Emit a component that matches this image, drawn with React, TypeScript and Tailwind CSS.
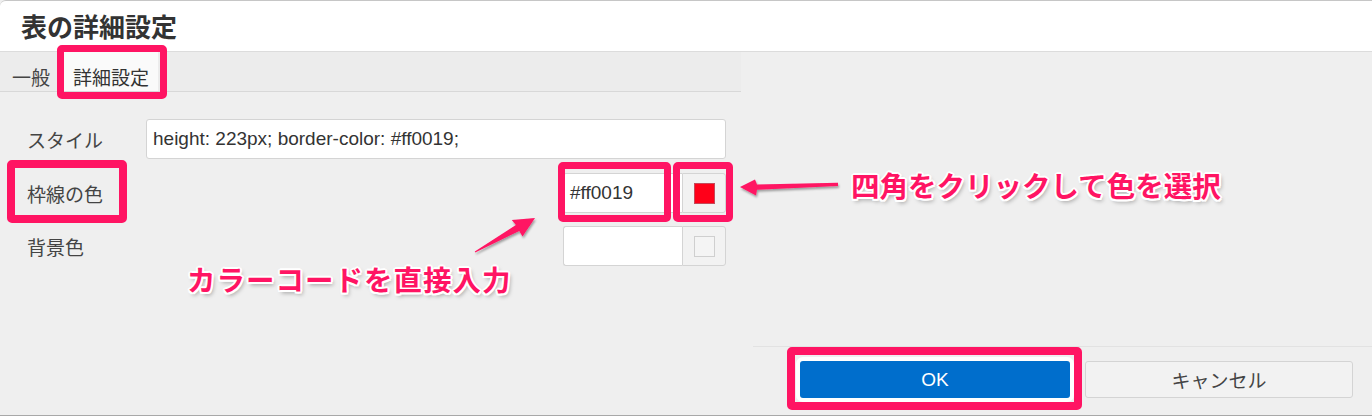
import React from "react";

const PINK = "#ff1463";

function Swatch({ color, border }: { color: string; border: string }) {
  return (
    <div className="w-[44px] h-full border border-[#d4d4d4] rounded-r-[3px] bg-[#f2f2f2] flex items-center justify-center">
      <div className="w-[21px] h-[21px] border" style={{ backgroundColor: color, borderColor: border }} />
    </div>
  );
}

export default function App() {
  const labelCls = "w-[146px] pl-[27px] text-[19px] text-[#444] leading-none";
  const annot =
    "absolute font-bold text-[28.5px] leading-none text-[#ff1463] whitespace-nowrap [text-shadow:2px_0_0_#fff,-2px_0_0_#fff,0_2px_0_#fff,0_-2px_0_#fff,1.5px_1.5px_0_#fff,-1.5px_-1.5px_0_#fff,1.5px_-1.5px_0_#fff,-1.5px_1.5px_0_#fff,2px_3px_4px_rgba(0,0,0,0.35)]";
  return (
    <div className="relative w-[1372px] h-[416px] overflow-hidden bg-[#efefef] flex flex-col border-b border-[#a8a8a8] font-['Noto_Sans_CJK_JP',sans-serif]">
      {/* Title */}
      <div className="h-[52px] shrink-0 bg-white border-t border-b border-t-[#c6c6c6] border-b-[#dcdcdc] rounded-tl-[6px] pl-[21px] flex items-center text-[26px] font-bold text-[#333] leading-none">
        表の詳細設定
      </div>

      <div className="flex-1 flex min-h-0">
        {/* Left column */}
        <div className="w-[753px] shrink-0 flex flex-col">
          <div className="w-[741px] h-[40px] border-b border-[#d8d8d8] bg-[#ececec] flex">
            <div className="pl-[12px] pr-[14px] pt-[10px] flex items-center text-[19px] text-[#444] leading-none">一般</div>
            <div className="bg-[#fafafa] px-[9px] pt-[10px] flex items-center text-[19px] text-[#333] leading-none">詳細設定</div>
          </div>

          <div className="w-[726px] pt-[27px] flex flex-col">
            <div className="flex items-center h-[40px]">
              <div className={labelCls}>スタイル</div>
              <div className="w-[580px] h-full bg-white border border-[#d4d4d4] rounded-[3px] px-[6px] flex items-center font-['Liberation_Sans',sans-serif] text-[19px] text-[#333]">
                height: 223px; border-color: #ff0019;
              </div>
            </div>

            <div className="flex items-center h-[40px] mt-[14px]">
              <div className={labelCls}>枠線の色</div>
              <div className="ml-auto flex h-full">
                <div className="w-[119px] h-full bg-white border border-r-0 border-[#d4d4d4] rounded-l-[3px] px-[6px] flex items-center font-['Liberation_Sans',sans-serif] text-[19px] text-[#333]">
                  #ff0019
                </div>
                <Swatch color="#ff0019" border="#c44a5a" />
              </div>
            </div>

            <div className="flex items-center h-[40px] mt-[13px]">
              <div className={labelCls}>背景色</div>
              <div className="ml-auto flex h-full">
                <div className="w-[119px] h-full bg-white border border-r-0 border-[#d4d4d4] rounded-l-[3px]" />
                <Swatch color="#f4f4f4" border="#cfcfcf" />
              </div>
            </div>
          </div>
        </div>

        {/* Right column */}
        <div className="flex-1 flex flex-col justify-end">
          <div className="h-[69px] border-t border-[#e2e2e2] pt-[14px] pl-[47px] flex gap-[15px]">
            <button className="w-[270px] h-[37px] rounded-[3px] bg-[#006ecc] text-white text-[19px] leading-none font-['Liberation_Sans',sans-serif] ring-4 ring-white">
              OK
            </button>
            <button className="w-[268px] h-[37px] rounded-[3px] bg-[#f2f2f2] border border-[#d4d4d4] text-[#444] text-[19px] leading-none">
              キャンセル
            </button>
          </div>
        </div>
      </div>

      {/* Annotation boxes */}
      <div className="absolute left-[57px] top-[45px] w-[110px] h-[54px] border-[7px] border-[#ff1463] rounded-[5px]" />
      <div className="absolute left-[7px] top-[160px] w-[120px] h-[63px] border-[8px] border-[#ff1463] rounded-[5px]" />
      <div className="absolute left-[558px] top-[162px] w-[113px] h-[60px] border-[7px] border-[#ff1463] rounded-[5px]" />
      <div className="absolute left-[673px] top-[162px] w-[60px] h-[60px] border-[7px] border-[#ff1463] rounded-[5px]" />
      <div className="absolute left-[787px] top-[347px] w-[295px] h-[63px] border-[8px] border-[#ff1463] rounded-[5px]" />

      {/* Arrows */}
      <svg className="absolute left-0 top-0 pointer-events-none" width="1372" height="416">
        <defs>
          <filter id="sh" x="-20%" y="-50%" width="140%" height="200%">
            <feDropShadow dx="1" dy="2" stdDeviation="1.2" floodColor="#000" floodOpacity="0.35" />
          </filter>
        </defs>
        <polygon
          points="838,182.8 757,184.6 755,179.5 740,187 756,195.5 757,189.8 838,186"
          fill={PINK}
          filter="url(#sh)"
        />
        <polygon
          points="475.2,252.4 519.3,230.9 522.5,236.5 535,218 511.8,220 515.9,224.9 474.8,251.6"
          fill={PINK}
          filter="url(#sh)"
        />
      </svg>

      <div className={annot + " left-[851px] top-[171px]"}>四角をクリックして色を選択</div>
      <div className={annot + " left-[187px] top-[265px] tracking-[1px]"}>カラーコードを直接入力</div>
    </div>
  );
}
